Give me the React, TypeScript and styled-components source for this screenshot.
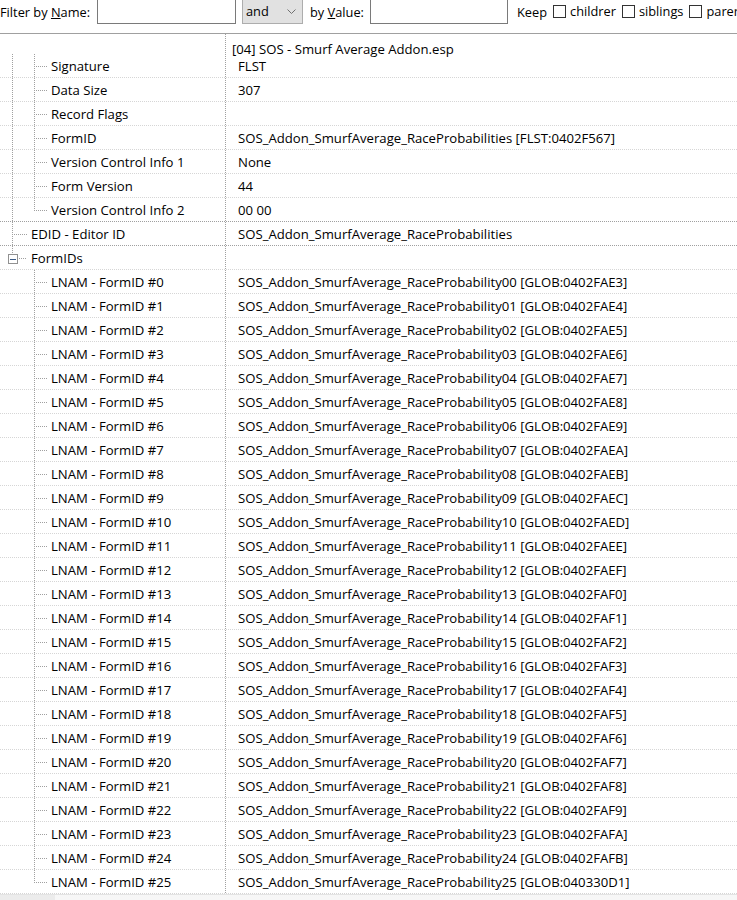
import React, { FC } from 'react';
import styled, { createGlobalStyle } from 'styled-components';

type Kind = 'pipe' | 'tee' | 'elbow' | 'blank';

type Node = {
  name: string;
  value: string;
  guides: { kind: Kind; width: number; box?: boolean }[];
  dark?: boolean;
};

const GlobalStyle = createGlobalStyle`
  html, body {
    margin: 0;
    padding: 0;
    background: #fff;
  }
  body {
    font-family: 'Open Sans', 'Noto Sans', sans-serif;
    font-size: 12px;
    color: #000;
    overflow: hidden;
  }
`;

const hex = (n: number) => n.toString(16).toUpperCase().padStart(8, '0');

const childGuides = (last: boolean, ancestor: boolean) => [
  { kind: (ancestor ? 'pipe' : 'blank') as Kind, width: 22 },
  { kind: (last ? 'elbow' : 'tee') as Kind, width: 25 }
];

const headerRows: [string, string][] = [
  ['Signature', 'FLST'],
  ['Data Size', '307'],
  ['Record Flags', ''],
  ['FormID', 'SOS_Addon_SmurfAverage_RaceProbabilities [FLST:0402F567]'],
  ['Version Control Info 1', 'None'],
  ['Form Version', '44'],
  ['Version Control Info 2', '00 00']
];

const nodes: Node[] = [
  ...headerRows.map(([name, value], i) => ({
    name,
    value,
    guides: childGuides(i === headerRows.length - 1, true),
    dark: i === headerRows.length - 1
  })),
  {
    name: 'EDID - Editor ID',
    value: 'SOS_Addon_SmurfAverage_RaceProbabilities',
    guides: [{ kind: 'tee', width: 27 }],
    dark: true
  },
  {
    name: 'FormIDs',
    value: '',
    guides: [{ kind: 'elbow', width: 27, box: true }]
  },
  ...Array.from({ length: 26 }, (_, i) => ({
    name: `LNAM - FormID #${i}`,
    value: `SOS_Addon_SmurfAverage_RaceProbability${String(i).padStart(2, '0')} [GLOB:${
      i === 25 ? '040330D1' : hex(0x0402fae3 + i)
    }]`,
    guides: childGuides(i === 25, false)
  }))
];

// dotted tree connector, drawn per row
const Guide: FC<{ kind: Kind; width: number; box?: boolean }> = ({ kind, width, box }) => {
  const x = 12.5;
  const mid = 12.5;
  const stroke = { stroke: '#a0a0a0', strokeWidth: 1, strokeDasharray: '1 1' };
  return (
    <GuideSvg width={width} height={24} viewBox={`0 0 ${width} 24`}>
      {kind !== 'blank' && (
        <line x1={x} y1={0} x2={x} y2={kind === 'elbow' ? (box ? 8 : mid) : 24} {...stroke} />
      )}
      {(kind === 'tee' || kind === 'elbow') && (
        <line x1={box ? 17 : x + 1} y1={mid} x2={width} y2={mid} {...stroke} />
      )}
      {box && (
        <g>
          <rect x={8.5} y={8.5} width={9} height={9} fill="#fff" stroke="#919191" />
          <line x1={10} y1={13} x2={16} y2={13} stroke="#3b5a86" strokeWidth={1} />
        </g>
      )}
    </GuideSvg>
  );
};

export default function App() {
  return (
    <Page>
      <GlobalStyle />
      <Toolbar>
        <Label $w={97}>
          Filter by <u>N</u>ame:
        </Label>
        <Input $w={139} />
        <Combo>
          <span>and</span>
          <svg width="9" height="5" viewBox="0 0 9 5">
            <path d="M0.5 0.5 L4.5 4.5 L8.5 0.5" fill="none" stroke="#707070" strokeWidth="1" />
          </svg>
        </Combo>
        <Label $w={67} $pad={7}>
          by <u>V</u>alue:
        </Label>
        <Input $w={138} />
        <Label $w={45} $pad={9}>
          Keep
        </Label>
        <Check>
          <Box />
          childrer
        </Check>
        <Check>
          <Box />
          siblings
        </Check>
        <Check>
          <Box />
          parer
        </Check>
      </Toolbar>
      <Tree>
        <HeaderRow>
          <NameCell />
          <HeaderCell>[04] SOS - Smurf Average Addon.esp</HeaderCell>
        </HeaderRow>
        {nodes.map((n) => (
          <Row key={n.name} $dark={n.dark}>
            <NameCell>
              {n.guides.map((g, i) => (
                <Guide key={i} {...g} />
              ))}
              <Name>{n.name}</Name>
            </NameCell>
            <ValueCell>{n.value}</ValueCell>
          </Row>
        ))}
      </Tree>
      <HScroll>
        <Thumb />
      </HScroll>
    </Page>
  );
}

const Page = styled.div`
  width: 737px;
  height: 900px;
  display: flex;
  flex-direction: column;
  overflow: hidden;
`;

const Toolbar = styled.div`
  height: 33px;
  flex: none;
  display: flex;
  align-items: flex-start;
  border-bottom: 1px solid #a0a0a0;
  white-space: nowrap;
  overflow: hidden;
  font-size: 12.8px;
`;

const Label = styled.div<{ $w: number; $pad?: number }>`
  flex: none;
  width: ${({ $w }) => $w}px;
  padding-left: ${({ $pad }) => $pad || 0}px;
  box-sizing: border-box;
  line-height: 24px;
`;

const Input = styled.div<{ $w: number }>`
  flex: none;
  width: ${({ $w }) => $w}px;
  height: 25px;
  margin-top: -1px;
  box-sizing: border-box;
  border: 1px solid #7a7a7a;
  background: #fff;
`;

const Combo = styled.div`
  flex: none;
  width: 61px;
  height: 25px;
  margin: -1px 0 0 6px;
  box-sizing: border-box;
  border: 1px solid #adadad;
  background: #e1e1e1;
  display: flex;
  align-items: center;
  justify-content: space-between;
  padding: 0 6px 0 3px;

  span {
    margin-top: -1px;
  }
`;

const Check = styled.label`
  flex: none;
  display: flex;
  align-items: center;
  gap: 4px;
  height: 22px;
  margin-left: 6px;

  &:first-of-type {
    margin-left: 0;
  }
`;

const Box = styled.span`
  width: 13px;
  height: 13px;
  box-sizing: border-box;
  border: 1px solid #333;
  background: #fff;
`;

const Tree = styled.div`
  flex: 1;
  display: flex;
  flex-direction: column;
  font-size: 13.15px;
`;

const HeaderRow = styled.div`
  display: grid;
  grid-template-columns: 225px 1fr;
  height: 20px;
`;

const HeaderCell = styled.div`
  border-left: 1px dotted #a0a0a0;
  padding: 7px 0 0 6px;
  line-height: 16px;
  white-space: nowrap;
  overflow: visible;
`;

const Row = styled.div<{ $dark?: boolean }>`
  display: grid;
  grid-template-columns: 225px 1fr;
  height: 24px;
  box-sizing: border-box;
  border-bottom: 1px dotted ${({ $dark }) => ($dark ? '#a0a0a0' : '#d6d6d6')};
`;

const NameCell = styled.div`
  display: flex;
  align-items: flex-start;
  height: 23px;
  overflow: hidden;
`;

const GuideSvg = styled.svg`
  flex: none;
  display: block;
  shape-rendering: crispEdges;
`;

const Name = styled.span`
  padding: 1px 0 0 4px;
  line-height: 23px;
  white-space: nowrap;
`;

const ValueCell = styled.div`
  border-left: 1px dotted #a0a0a0;
  padding: 1px 0 0 12px;
  line-height: 23px;
  white-space: nowrap;
  overflow: hidden;
`;

const HScroll = styled.div`
  height: 6px;
  flex: none;
  border-top: 1px solid #e3e3e3;
  background: #f7f7f7;
`;

const Thumb = styled.div`
  width: 55px;
  height: 100%;
  background: #ececec;
`;
